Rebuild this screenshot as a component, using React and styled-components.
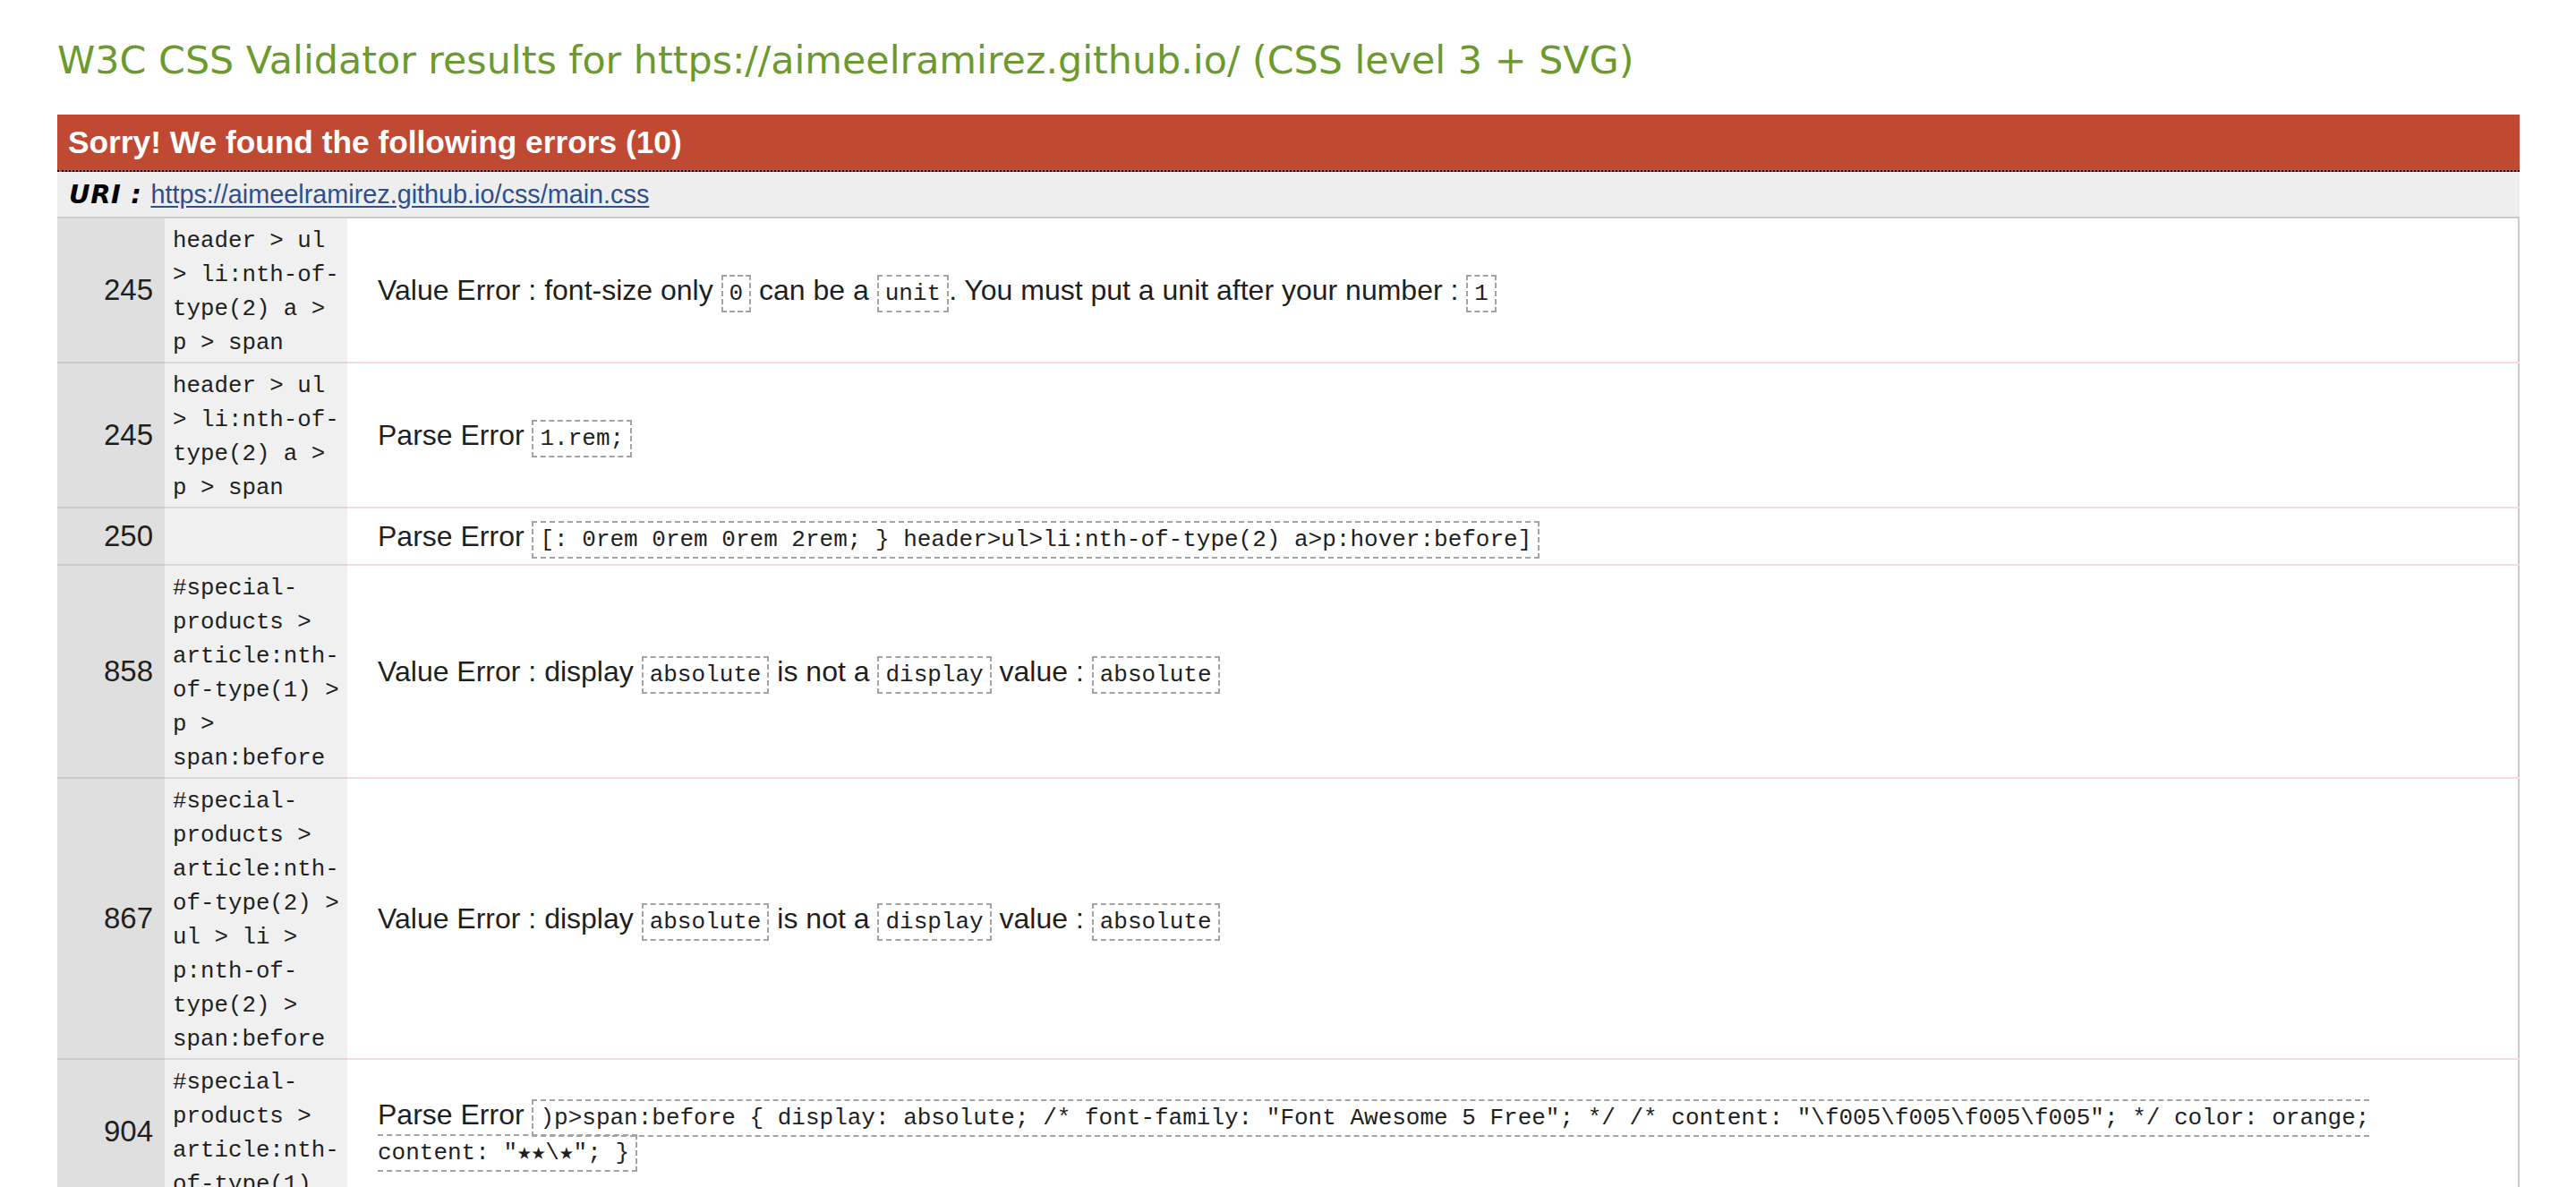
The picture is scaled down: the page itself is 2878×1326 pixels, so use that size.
import React from "react";
import styled, { createGlobalStyle } from "styled-components";

const GlobalStyle = createGlobalStyle`
  html, body {
    margin: 0;
    padding: 0;
    background: #ffffff;
  }
  body {
    font-family: "Liberation Sans", Arial, sans-serif;
    color: #1f1f1f;
  }
`;

const Page = styled.main`
  padding: 0 63px 40px 64px;
`;

const Title = styled.h2`
  margin: 0 0 37px 0;
  padding-top: 43px;
  font-family: "DejaVu Sans", Verdana, sans-serif;
  font-weight: normal;
  font-size: 42.8px;
  line-height: 48px;
  color: #6c9a2c;
  white-space: nowrap;
`;

const ErrorSection = styled.section`
  display: flex;
  flex-direction: column;
`;

const ErrorHeading = styled.h3`
  margin: 0;
  height: 62px;
  padding: 0 12px;
  display: flex;
  align-items: center;
  background: #c04934;
  color: #ffffff;
  font-family: "Liberation Sans", Arial, sans-serif;
  font-weight: bold;
  font-size: 35.3px;
  border-bottom: 2px dotted #000000;
`;

const UriBar = styled.div`
  height: 50px;
  padding: 0 13px;
  display: flex;
  align-items: center;
  gap: 10px;
  background: #eeeeee;
  border-bottom: 2px solid #cccccc;
`;

const UriLabel = styled.span`
  font-family: "DejaVu Sans", Verdana, sans-serif;
  font-weight: bold;
  font-style: italic;
  font-size: 29px;
  letter-spacing: 0.6px;
  color: #000000;
`;

const UriLink = styled.a`
  font-family: "Liberation Sans", Arial, sans-serif;
  font-size: 28.8px;
  color: #2c4f8f;
  text-decoration: underline;
  text-underline-offset: 3px;
`;

const Table = styled.table`
  width: 100%;
  border-collapse: collapse;
  border-right: 2px solid #cccccc;
  table-layout: fixed;
`;

const LineCell = styled.td`
  width: 107px;
  padding: 0 13px 0 0;
  background: #dfdfdf;
  border-bottom: 2px solid #c9c9c9;
  text-align: right;
  vertical-align: middle;
  font-family: "Liberation Sans", Arial, sans-serif;
  font-size: 33px;
  color: #1f1f1f;
`;

const SelectorCell = styled.td`
  width: 191px;
  padding: 7px 4px 1px 9px;
  background: #f0f0f0;
  border-bottom: 2px solid #d8d8d8;
  vertical-align: middle;
  font-family: "Liberation Mono", "Courier New", monospace;
  font-size: 25.8px;
  line-height: 38px;
  color: #1f1f1f;
`;

const MessageCell = styled.td`
  padding: 12px 60px 11px 34px;
  background: #ffffff;
  border-bottom: 2px solid #f6dcdc;
  vertical-align: middle;
  font-family: "Liberation Sans", Arial, sans-serif;
  font-size: 32px;
  line-height: 39px;
  color: #1f1f1f;
`;

const Code = styled.code`
  font-family: "Liberation Mono", "Courier New", "DejaVu Sans Mono", monospace;
  font-size: 26px;
  line-height: 26px;
  padding: 4px 7px;
  border: 2px dashed #a3a3a3;
  color: #1f1f1f;
`;

const errors = [
  {
    line: "245",
    selector: "header > ul > li:nth-of-type(2) a > p > span",
    parts: [
      "Value Error : font-size only ",
      { code: "0" },
      " can be a ",
      { code: "unit" },
      ". You must put a unit after your number : ",
      { code: "1" },
    ],
  },
  {
    line: "245",
    selector: "header > ul > li:nth-of-type(2) a > p > span",
    parts: ["Parse Error ", { code: "1.rem;" }],
  },
  {
    line: "250",
    selector: "",
    parts: [
      "Parse Error ",
      { code: "[: 0rem 0rem 0rem 2rem; } header>ul>li:nth-of-type(2) a>p:hover:before]" },
    ],
  },
  {
    line: "858",
    selector: "#special-products > article:nth-of-type(1) > p > span:before",
    parts: [
      "Value Error : display ",
      { code: "absolute" },
      " is not a ",
      { code: "display" },
      " value : ",
      { code: "absolute" },
    ],
  },
  {
    line: "867",
    selector:
      "#special-products > article:nth-of-type(2) > ul > li > p:nth-of-type(2) > span:before",
    parts: [
      "Value Error : display ",
      { code: "absolute" },
      " is not a ",
      { code: "display" },
      " value : ",
      { code: "absolute" },
    ],
  },
  {
    line: "904",
    selector: "#special-products > article:nth-of-type(1)",
    parts: [
      "Parse Error ",
      {
        code:
          ')p>span:before { display: absolute; /* font-family: "Font Awesome 5 Free"; */ /* content: "\\f005\\f005\\f005\\f005"; */ color: orange; content: "★★\\★"; }',
      },
    ],
  },
];

export default function App() {
  return (
    <>
      <GlobalStyle />
      <Page>
        <Title>
          W3C CSS Validator results for https://aimeelramirez.github.io/ (CSS level 3 + SVG)
        </Title>
        <ErrorSection>
          <ErrorHeading>Sorry! We found the following errors (10)</ErrorHeading>
          <UriBar>
            <UriLabel>URI :</UriLabel>
            <UriLink href="#">https://aimeelramirez.github.io/css/main.css</UriLink>
          </UriBar>
          <Table>
            <tbody>
              {errors.map((err, i) => (
                <tr key={i}>
                  <LineCell>{err.line}</LineCell>
                  <SelectorCell>{err.selector}</SelectorCell>
                  <MessageCell>
                    {err.parts.map((p, j) =>
                      typeof p === "string" ? (
                        <React.Fragment key={j}>{p}</React.Fragment>
                      ) : (
                        <Code key={j}>{p.code}</Code>
                      )
                    )}
                  </MessageCell>
                </tr>
              ))}
            </tbody>
          </Table>
        </ErrorSection>
      </Page>
    </>
  );
}
